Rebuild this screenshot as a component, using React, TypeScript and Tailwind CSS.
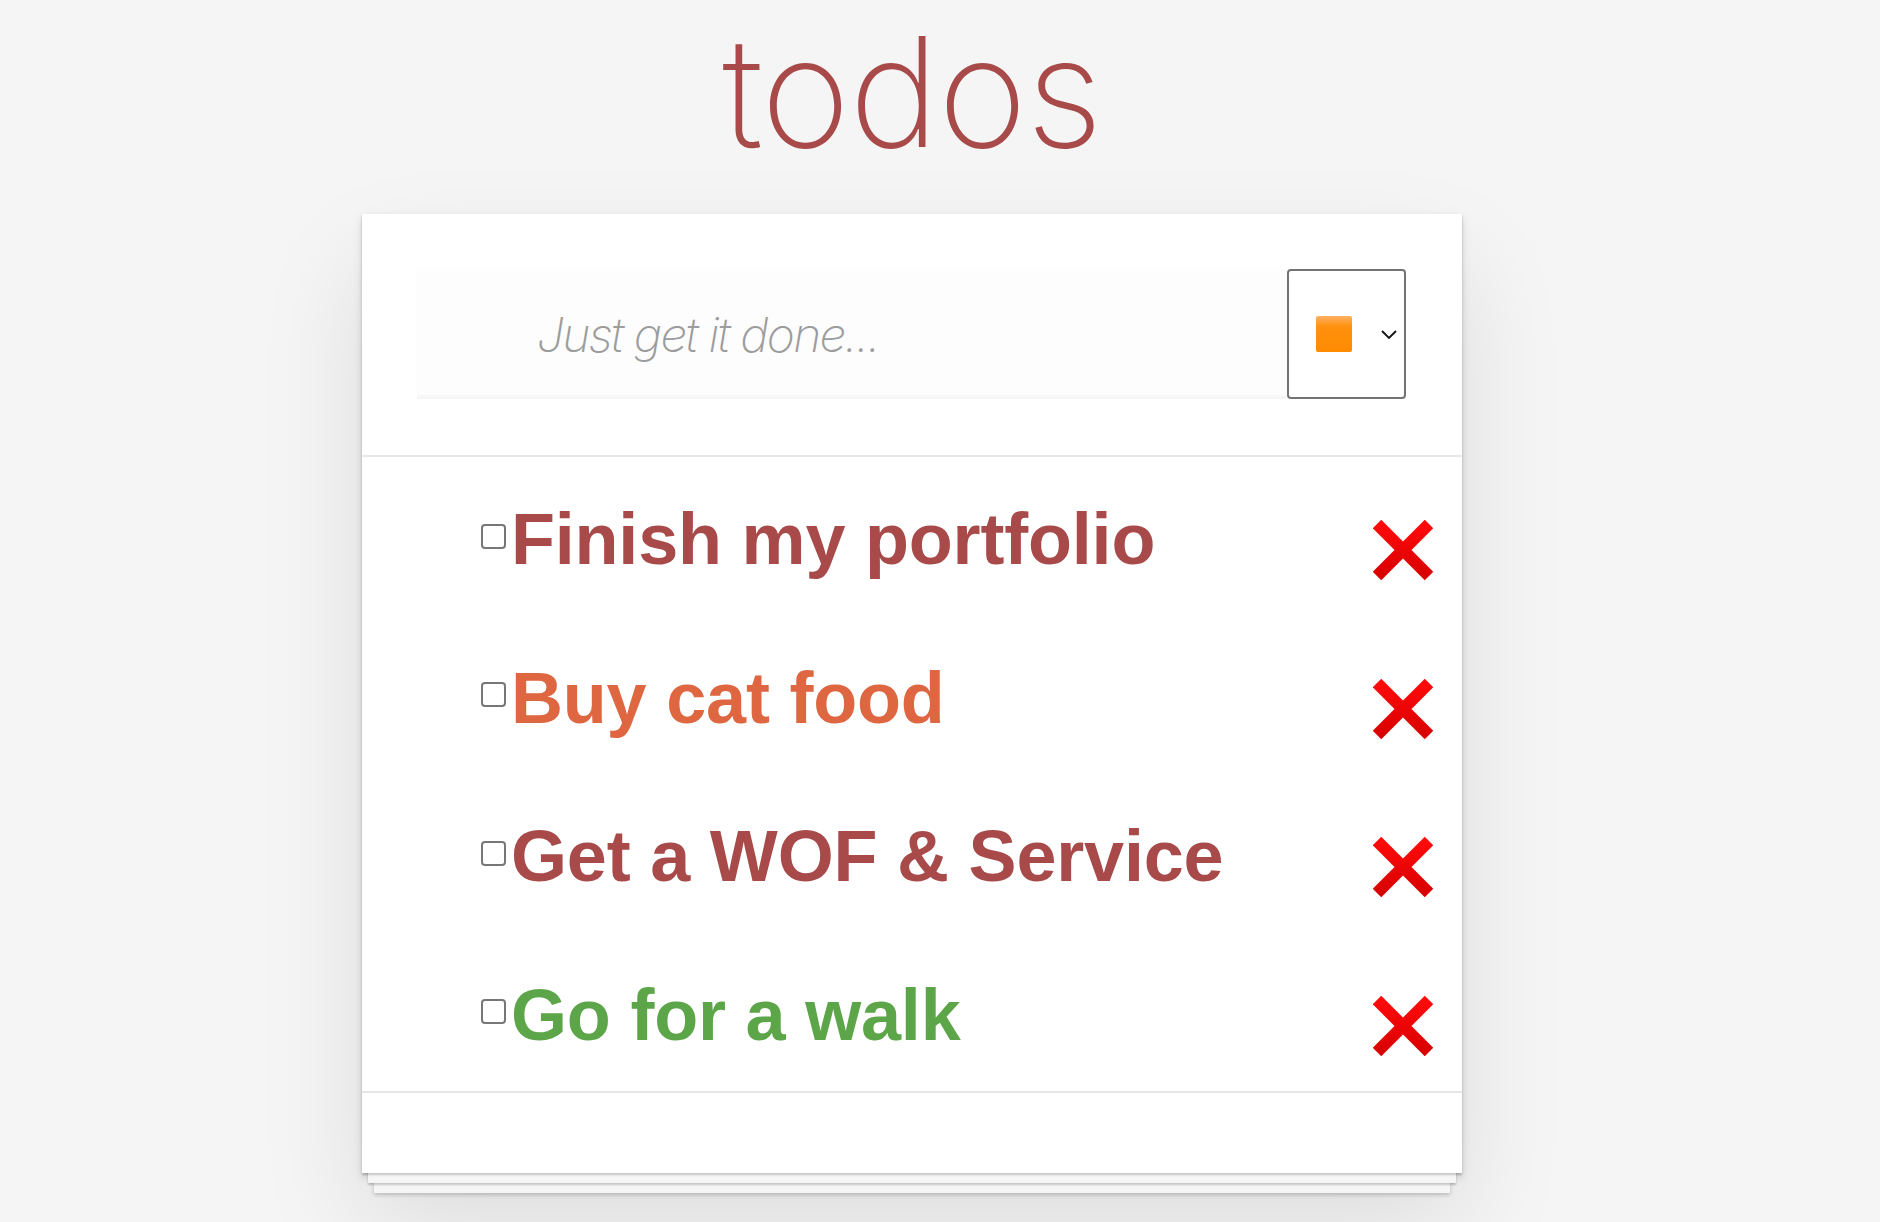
import React from "react";

type Todo = { id: number; title: string; color: string };

const todos: Todo[] = [
  { id: 1, title: "Finish my portfolio", color: "text-[#a94a4a]" },
  { id: 2, title: "Buy cat food", color: "text-[#de6742]" },
  { id: 3, title: "Get a WOF & Service", color: "text-[#a94a4a]" },
  { id: 4, title: "Go for a walk", color: "text-[#5ca548]" },
];

function CrossIcon() {
  return (
    <svg width="60" height="60" viewBox="0 0 60 60" aria-hidden="true">
      <defs>
        <linearGradient id="crossFill" x1="0" y1="0" x2="0" y2="1">
          <stop offset="0%" stopColor="#ff0a0a" />
          <stop offset="100%" stopColor="#d80000" />
        </linearGradient>
      </defs>
      <g stroke="url(#crossFill)" strokeWidth="12" strokeLinecap="butt">
        <line x1="4" y1="4" x2="56" y2="56" />
        <line x1="56" y1="4" x2="4" y2="56" />
      </g>
    </svg>
  );
}

function ColorSelect() {
  return (
    <button
      type="button"
      className="flex h-[130px] w-[119px] shrink-0 items-center rounded-[4px] border-2 border-[#737373] bg-white pl-[27px]"
    >
      <span className="h-[36px] w-[36px] rounded-[2px] bg-[linear-gradient(#ffb264_0%,#ff9210_28%,#ff8a00_100%)]" />
      <svg
        width="16"
        height="9"
        viewBox="0 0 16 9"
        className="ml-[29px]"
        aria-hidden="true"
      >
        <polyline
          points="1,1 8,8 15,1"
          fill="none"
          stroke="#111"
          strokeWidth="1.8"
        />
      </svg>
    </button>
  );
}

function TodoRow({ todo }: { todo: Todo }) {
  return (
    <li className="flex h-[158.5px] items-center pl-[119px] pr-[29px]">
      <span className="h-[25px] w-[25px] shrink-0 rounded-[4px] border-2 border-[#777]" />
      <span
        className={`ml-[5px] pt-[6px] font-['Liberation_Sans',Arial,sans-serif] text-[72px] font-bold leading-normal tracking-[-0.2px] ${todo.color}`}
      >
        {todo.title}
      </span>
      <button type="button" className="ml-auto mt-[28px]">
        <CrossIcon />
      </button>
    </li>
  );
}

export default function App() {
  return (
    <div className="flex min-h-screen flex-col items-center bg-[#f5f5f5] pr-[56px]">
      <h1 className="mt-[16px] font-['Inter','Helvetica_Neue',sans-serif] text-[152px] font-extralight leading-none tracking-[-1px] text-[#a94a4a]">
        todos
      </h1>
      <section className="mt-[46px] w-[1100px] bg-white shadow-[0_2px_2px_rgba(0,0,0,0.2),0_16px_0_-6px_#f6f6f6,0_18px_2px_-6px_rgba(0,0,0,0.2),0_32px_0_-12px_#f6f6f6,0_34px_4px_-12px_rgba(0,0,0,0.2),0_4px_8px_0_rgba(0,0,0,0.15),0_50px_100px_0_rgba(0,0,0,0.1)]">
        <header className="flex items-stretch border-b-2 border-[#e6e6e6] pb-[56px] pl-[55px] pr-[56px] pt-[55px]">
          <input
            className="h-[130px] min-w-0 flex-1 bg-[#fdfdfd] pl-[120px] font-['Inter','Helvetica_Neue',sans-serif] text-[48px] font-extralight italic tracking-[-1.8px] text-[#4d4d4d] shadow-[inset_0_-4px_2px_rgba(0,0,0,0.03)] outline-none placeholder:text-[#9c9c9c]"
            placeholder="Just get it done..."
          />
          <ColorSelect />
        </header>
        <ul className="border-b-2 border-[#e6e6e6]">
          {todos.map((todo) => (
            <TodoRow key={todo.id} todo={todo} />
          ))}
        </ul>
        <footer className="h-[80px]" />
      </section>
    </div>
  );
}
